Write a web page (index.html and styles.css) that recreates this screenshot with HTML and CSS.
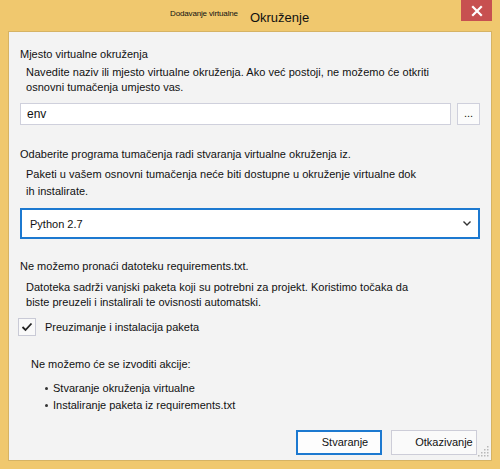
FILE: index.html
```html
<!DOCTYPE html>
<html>
<head>
<meta charset="utf-8">
<link rel="stylesheet" href="styles.css">
</head>
<body>
<div class="window">
  <div class="titlebar">
    <span class="title-small">Dodavanje virtualne</span>
    <span class="title-big">Okruženje</span>
    <div class="close-btn">
      <svg width="12" height="12" viewBox="0 0 12 12"><path d="M2 2 L10 10 M10 2 L2 10" stroke="#fff" stroke-width="2.2" stroke-linecap="square"/></svg>
    </div>
  </div>
  <div class="client">
    <div class="label">Mjesto virtualne okruženja</div>
    <div class="desc desc-1">Navedite naziv ili mjesto virtualne okruženja. Ako već postoji, ne možemo će otkriti osnovni tumačenja umjesto vas.</div>
    <div class="path-row">
      <div class="textbox">env</div>
      <div class="browse">...</div>
    </div>

    <div class="label label-2">Odaberite programa tumačenja radi stvaranja virtualne okruženja iz.</div>
    <div class="desc desc-2">Paketi u vašem osnovni tumačenja neće biti dostupne u okruženje virtualne dok ih instalirate.</div>
    <div class="select">
      <span>Python 2.7</span>
      <svg class="chev" width="8" height="5" viewBox="0 0 8 5"><path d="M0.5 0.5 L4 4 L7.5 0.5" fill="none" stroke="#333" stroke-width="1.4"/></svg>
    </div>

    <div class="label label-3">Ne možemo pronaći datoteku requirements.txt.</div>
    <div class="desc desc-3">Datoteka sadrži vanjski paketa koji su potrebni za projekt. Koristimo točaka da biste preuzeli i instalirali te ovisnosti automatski.</div>
    <div class="check-row">
      <div class="checkbox">
        <svg width="12" height="10" viewBox="0 0 12 10"><path d="M1.5 5 L4.5 8 L10.5 1.5" fill="none" stroke="#222" stroke-width="1.8"/></svg>
      </div>
      <span>Preuzimanje i instalacija paketa</span>
    </div>

    <div class="actions-title">Ne možemo će se izvoditi akcije:</div>
    <ul class="actions">
      <li>Stvaranje okruženja virtualne</li>
      <li>Instaliranje paketa iz requirements.txt</li>
    </ul>

    <div class="buttons">
      <div class="btn btn-primary">Stvaranje</div>
      <div class="btn btn-cancel">Otkazivanje</div>
    </div>
    <svg class="grip" width="12" height="12" viewBox="0 0 12 12" fill="#b8b8b8">
      <rect x="9" y="1" width="1.5" height="1.5"/>
      <rect x="6" y="4" width="1.5" height="1.5"/><rect x="9" y="4" width="1.5" height="1.5"/>
      <rect x="3" y="7" width="1.5" height="1.5"/><rect x="6" y="7" width="1.5" height="1.5"/><rect x="9" y="7" width="1.5" height="1.5"/>
      <rect x="0" y="10" width="1.5" height="1.5"/><rect x="3" y="10" width="1.5" height="1.5"/><rect x="6" y="10" width="1.5" height="1.5"/><rect x="9" y="10" width="1.5" height="1.5"/>
    </svg>
  </div>
</div>
</body>
</html>
```

FILE: styles.css
```css
* { box-sizing: border-box; }
html, body { margin: 0; padding: 0; }
body {
  font-family: "Liberation Sans", Arial, sans-serif;
  font-size: 11px;
  color: #111;
  background: #f0c86e;
}
.window {
  width: 500px;
  height: 469px;
  background: #f0c86e;
  display: flex;
  flex-direction: column;
}
.titlebar {
  height: 31px;
  display: flex;
  align-items: flex-start;
  padding-left: 170px;
  flex-shrink: 0;
}
.title-small {
  font-size: 8px;
  letter-spacing: -0.15px;
  margin-top: 9px;
  color: #111;
}
.title-big {
  font-size: 13px;
  margin-left: 12px;
  margin-top: 10px;
  color: #111;
}
.close-btn {
  margin-left: auto;
  margin-right: 8px;
  width: 31px;
  height: 21px;
  background: #c75050;
  display: flex;
  align-items: center;
  justify-content: center;
}
.client {
  position: relative;
  flex: 1;
  margin: 0 8px 8px 8px;
  background: #f3f3f3;
  border: 1px solid #d6b364;
  padding: 15px 11px 5px 11px;
  display: flex;
  flex-direction: column;
}
.label {
  line-height: 15px;
}
.desc {
  letter-spacing: 0.03px;
  margin-top: 5px;
  padding-left: 6px;
  line-height: 15px;
  width: 400px;
}
.desc-1 { margin-top: 3px; width: 418px; }
.path-row {
  display: flex;
  margin-top: 8px;
  height: 22px;
}
.textbox {
  width: 431px;
  height: 22px;
  background: #fff;
  border: 1px solid #cfd0dc;
  padding-left: 6px;
  line-height: 20px;
  font-size: 12px;
}
.browse {
  width: 23px;
  height: 22px;
  margin-left: 6px;
  background: #fbfbfb;
  border: 1px solid #cfd0dc;
  text-align: center;
  line-height: 18px;
}
.label-2 { margin-top: 22px; }
.desc-2 { margin-top: 4px; line-height: 17px; }
.select {
  margin-top: 8px;
  height: 31px;
  background: #fff;
  border: 2px solid #1c79d0;
  display: flex;
  align-items: center;
  padding-left: 8px;
  padding-right: 7px;
}
.select .chev { margin-left: auto; }
.label-3 { margin-top: 20px; }
.desc-3 { margin-top: 6px; }
.check-row {
  display: flex;
  align-items: center;
  margin-top: 8px;
  height: 18px;
}
.checkbox {
  width: 18px;
  height: 18px;
  border: 1px solid #c9cad6;
  background: #f9f9f9;
  display: flex;
  align-items: center;
  justify-content: center;
  margin-left: -2px;
}
.check-row span { margin-left: 9px; }
.actions-title {
  margin-top: 21px;
  padding-left: 11px;
  line-height: 15px;
}
.actions {
  margin: 8px 0 0 0;
  padding: 0 0 0 33px;
  list-style: none;
  line-height: 17px;
}
.actions li { position: relative; }
.actions li::before {
  content: "";
  position: absolute;
  left: -8px;
  top: 7px;
  width: 3px;
  height: 3px;
  background: #333;
  border-radius: 50%;
}
.buttons {
  margin-top: auto;
  display: flex;
  justify-content: flex-end;
  gap: 9px;
  padding-right: 3px;
}
.btn {
  width: 86px;
  height: 25px;
  line-height: 21px;
  text-align: center;
}
.btn-primary {
  background: #fdfdfd;
  border: 2px solid #1c79d0;
  padding-left: 12px;
}
.btn-cancel {
  background: #fafafa;
  border: 1px solid #cdcdd8;
  line-height: 23px;
  padding-left: 20px;
}
.grip {
  position: absolute;
  right: 1px;
  bottom: 3px;
}
```
